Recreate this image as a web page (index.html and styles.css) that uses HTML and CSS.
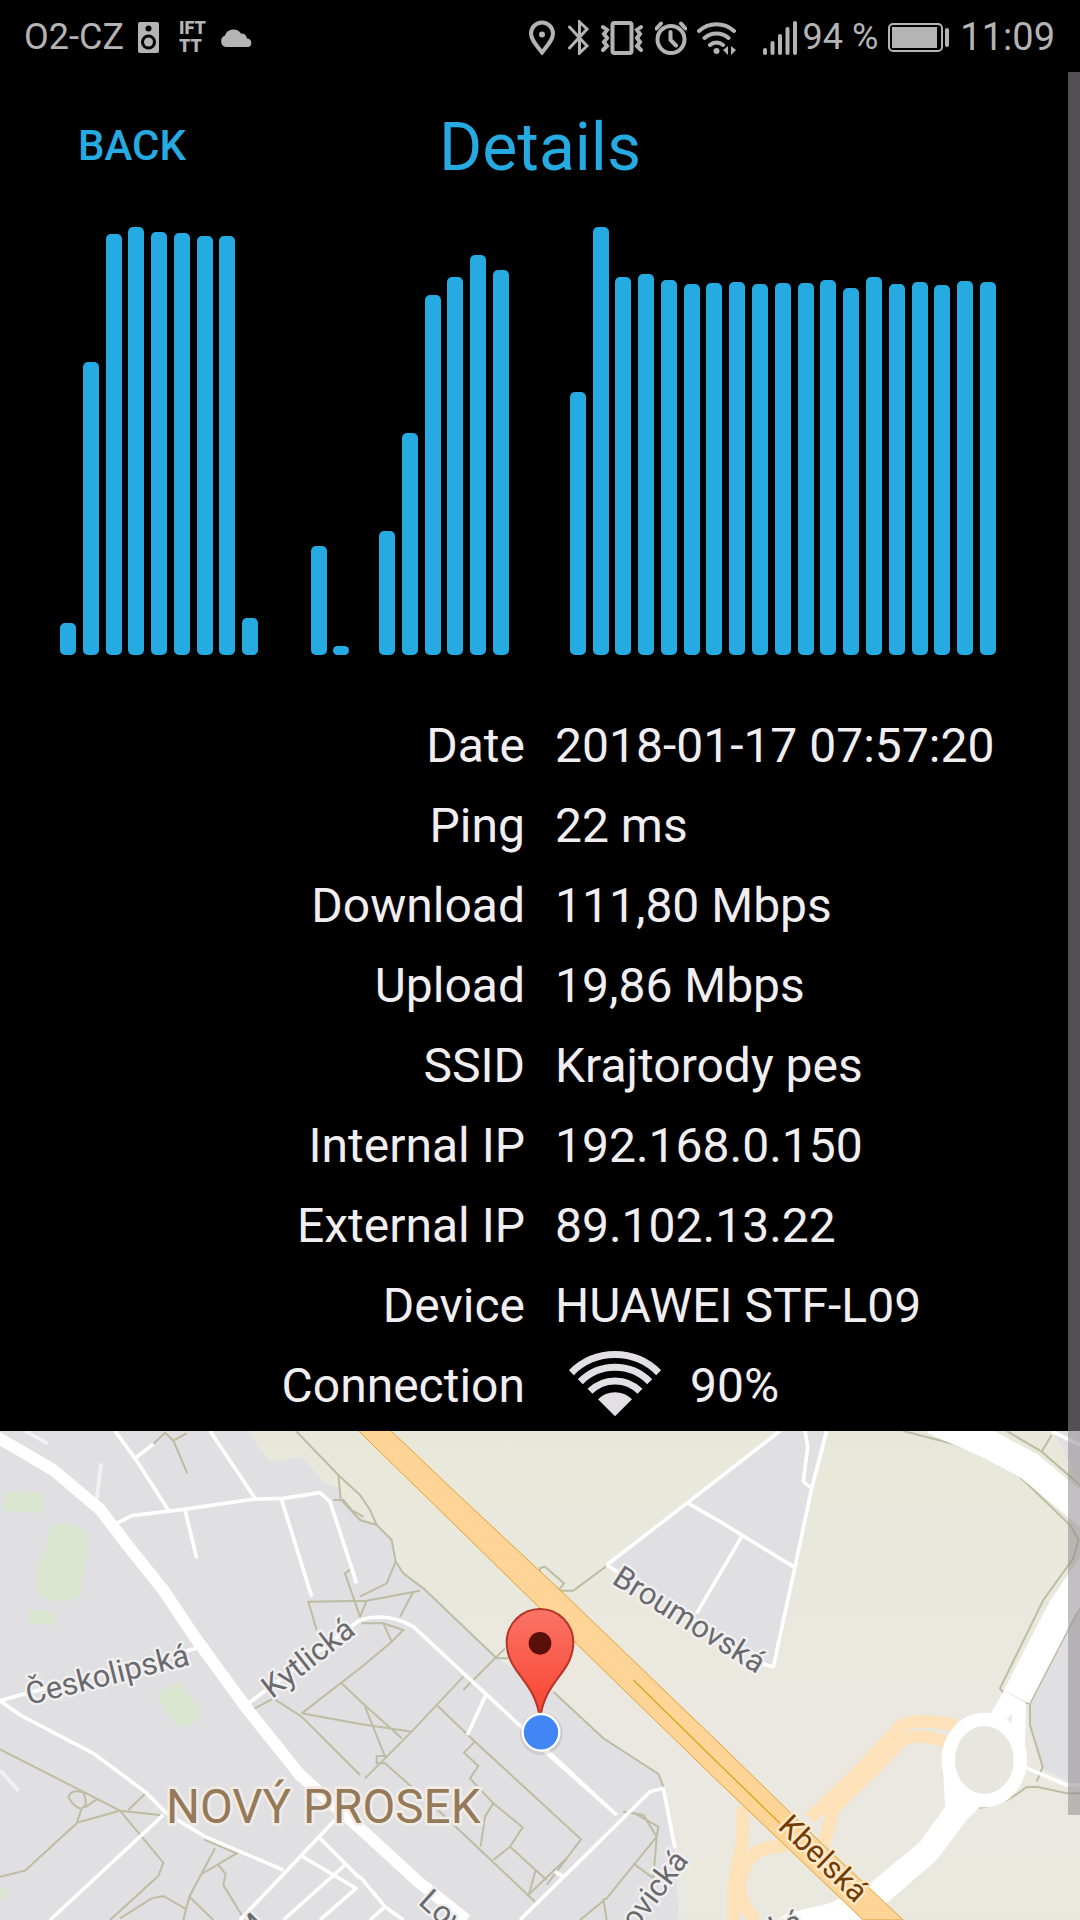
FILE: index.html
```html
<!DOCTYPE html>
<html lang="en">
<head>
    <meta charset="UTF-8">
    <meta name="viewport" content="width=device-width, initial-scale=1.0">
    <title>Details</title>
    <link rel="stylesheet" href="styles.css">
</head>
<body>

<!-- status bar -->
<div class="status">
    <div class="status-left">
        <span>O2-CZ</span>
        <svg class="icon" width="21" height="31" viewBox="0 0 21 31">
            <rect width="21" height="31" rx="2"/>
            <circle class="hole" cx="10.500" cy="6.500" r="3"/>
            <circle class="hole" cx="10.500" cy="20" r="7.500"/>
            <circle cx="10.500" cy="20" r="4.500"/>
        </svg>
        <span class="ifttt">IFT<br>TT</span>
        <svg class="icon" width="33" height="19" viewBox="0 0 33 19">
            <path d="M6 19a6 6 0 0 1-1-11.500A9 9 0 0 1 21 5.500a6 6 0 0 1 6 5A4.400 4.400 0 0 1 28.500 19z"/>
        </svg>
    </div>
    <div class="status-right">
        <svg class="line" width="28" height="35" viewBox="0 0 28 35">
            <path d="M13 32.500C8 26 2 20 2 13.500a11 11 0 0 1 22 0C24 20 18 26 13 32.500z"/>
            <circle class="dot" cx="13" cy="14.500" r="3"/>
        </svg>
        <svg class="line thin" width="24" height="35" viewBox="0 0 24 35">
            <path d="M2.500 7L20 26l-7.500 7V2L20 9 2.500 28"/>
        </svg>
        <svg class="line" width="44" height="35" viewBox="0 0 44 35">
            <rect x="11.500" y="3" width="19" height="30" rx="2"/>
            <path d="M2 7l4 3-3 4 3 4-3 4 3 4-4 4M40 7l-4 3 3 4-3 4 3 4-3 4 4 4"/>
        </svg>
        <svg class="line" width="32" height="35" viewBox="0 0 32 35">
            <circle cx="16" cy="19.500" r="13.500"/>
            <path d="M15.500 12v8l5.500 5.500M1.500 8.500L6 3.500M30.500 8.500L26 3.500"/>
        </svg>
        <svg class="line" width="56" height="35" viewBox="0 0 56 35">
            <path d="M2 11a26 26 0 0 1 35 0M7.500 18a18 18 0 0 1 24 0M13 25a10 10 0 0 1 13 0"/>
            <circle class="dot" cx="19.500" cy="31" r="3"/>
            <path class="dot" d="M31 26v9l-5-5zM34 26v9l5-5z"/>
        </svg>
        <span class="level">
            <svg class="icon" width="34" height="35" viewBox="0 0 34 35">
                <rect y="28" width="4" height="7" rx="2"/>
                <rect x="7.500" y="21" width="4" height="14" rx="2"/>
                <rect x="15" y="14" width="4" height="21" rx="2"/>
                <rect x="22.500" y="7" width="4" height="28" rx="2"/>
                <rect x="30" y="1" width="4" height="34" rx="2"/>
            </svg>
            94 %
        </span>
        <svg class="icon" width="62" height="29" viewBox="0 0 62 29">
            <rect class="frame" x="1" y="1" width="53" height="27" rx="4"/>
            <rect x="4" y="4" width="45" height="21"/>
            <rect x="57" y="5" width="4" height="19" rx="2"/>
        </svg>
        <span class="clock">11:09</span>
    </div>
</div>

<main class="screen">
    <header class="header">
        <button class="back" type="button">BACK</button>
        <h1 class="title">Details</h1>
    </header>

    <!-- download on the left, upload on the right -->
    <div class="charts">
        <div class="chart">
            <i style="height:32px"></i>
            <i style="height:293px"></i>
            <i style="height:421px"></i>
            <i style="height:428px"></i>
            <i style="height:423px"></i>
            <i style="height:422px"></i>
            <i style="height:419px"></i>
            <i style="height:419px"></i>
            <i style="height:37px"></i>
            <i style="height:0px"></i>
            <i style="height:0px"></i>
            <i style="height:109px"></i>
            <i style="height:9px"></i>
            <i style="height:0px"></i>
            <i style="height:124px"></i>
            <i style="height:222px"></i>
            <i style="height:360px"></i>
            <i style="height:378px"></i>
            <i style="height:400px"></i>
            <i style="height:385px"></i>
        </div>
        <div class="chart">
            <i style="height:0px"></i>
            <i style="height:263px"></i>
            <i style="height:428px"></i>
            <i style="height:378px"></i>
            <i style="height:381px"></i>
            <i style="height:375px"></i>
            <i style="height:371px"></i>
            <i style="height:372px"></i>
            <i style="height:373px"></i>
            <i style="height:371px"></i>
            <i style="height:372px"></i>
            <i style="height:372px"></i>
            <i style="height:375px"></i>
            <i style="height:367px"></i>
            <i style="height:378px"></i>
            <i style="height:371px"></i>
            <i style="height:373px"></i>
            <i style="height:370px"></i>
            <i style="height:374px"></i>
            <i style="height:373px"></i>
        </div>
    </div>

    <table class="details">
        <tr><th scope="row">Date</th><td>2018-01-17 07:57:20</td></tr>
        <tr><th scope="row">Ping</th><td>22 ms</td></tr>
        <tr><th scope="row">Download</th><td>111,80 Mbps</td></tr>
        <tr><th scope="row">Upload</th><td>19,86 Mbps</td></tr>
        <tr><th scope="row">SSID</th><td>Krajtorody pes</td></tr>
        <tr><th scope="row">Internal IP</th><td>192.168.0.150</td></tr>
        <tr><th scope="row">External IP</th><td>89.102.13.22</td></tr>
        <tr><th scope="row">Device</th><td>HUAWEI STF-L09</td></tr>
        <tr>
            <th scope="row">Connection</th>
            <td>
                <div class="signal">
                    <svg width="92" height="69" viewBox="0 0 276 207">
                        <path class="arc" d="M7 65a185 185 0 0 1 262 0M34 92a147 147 0 0 1 208 0M63 121a106 106 0 0 1 150 0"/>
                        <path class="core" d="M138 196L87 145a72 72 0 0 1 102 0z"/>
                    </svg>
                    90%
                </div>
            </td>
        </tr>
    </table>

    <svg class="map" viewBox="0 33 3240 1467">
        <defs>
            <linearGradient id="pin" x1="0" y1="0" x2="0" y2="1">
                <stop offset="0" stop-color="#fa7466"/>
                <stop offset="1" stop-color="#f9412f"/>
            </linearGradient>
            <linearGradient id="land" x1="0" y1="0" x2="0" y2="1">
                <stop offset="0" stop-color="#e8e8da"/>
                <stop offset=".65" stop-color="#ebe8e1"/>
                <stop offset="1" stop-color="#e9e8de"/>
            </linearGradient>
        </defs>
        <rect class="land" y="33" width="3240" height="1467"/>

        <!-- built-up areas -->
        <path class="town" d="M0 33H750L770 75 810 125 905 110 975 190 1015 205 1050 270 1130 320 1175 360 1190 425 1210 460 1280 510 1490 715 1660 820 1810 955 1970 1060 1990 1100 2025 1285 2035 1500H0z"/>
        <path class="town" d="M1820 435L2060 250 2160 175 2330 33H2480L2435 205 2380 440 2320 740z"/>
        <path class="town" d="M3240 560L3090 850V915L3125 1045 3240 1100zM3160 33H3240V190z"/>
        <path class="park" d="M10 215l120 5v60l-120-8zM150 315q100-15 115 40l-20 160q-60 60-130 5-20-80 20-120zM85 568l80 8v40l-85-8zM470 820l65-35 70 80-10 35-50 25-50-50zM0 1400l20 10-5 30-15 5z"/>

        <!-- footpaths -->
        <g class="path">
            <path d="M460 72L495 38 520 62 562 160M520 62L560 40M888 33L1015 165 1080 225 1110 270 1130 315M1015 165L1022 238 1080 300 1130 315 1175 360 1187 425 1210 460 1270 505 1490 715H1525M1000 240H1030L1055 270 1090 290"/>
            <path d="M1187 425L1160 490 1080 530M1260 512L1100 542 925 545 950 630M1100 542L1080 590 1035 460 1052 448M1240 515L1200 590M1085 610L1150 610 1210 630 1175 665 1080 745 905 880M1150 610L1175 665"/>
            <path d="M760 868L820 835 905 890 1080 1065M905 880L1080 912 1235 935M1025 790L1080 842 1205 955M1095 860L1155 1010M1390 770L1235 935 1095 1075M1515 685L1390 810M1310 855L1425 965 1743 1258 1640 1395M1155 1030H1130V1008H1160M1155 1030L1330 1185 1605 1445"/>
            <path d="M1425 965L1392 998 1435 1038 1410 1075 1480 1150 1568 1222 1530 1280 1480 1320M1480 1150L1455 1190 1442 1280M1530 1280L1640 1380M1607 1350L1585 1430M1590 1420L1700 1315"/>
            <path d="M1660 815L1810 955 1975 1062 1990 1100M1870 1175L1930 1185 1970 1250 1820 1435 1740 1500M1900 1178L1975 1220 1970 1250 1960 1375 1900 1330M1810 1435L1820 1500"/>
            <path d="M0 988L230 1105 360 1172 480 1185M230 1208L360 1172 490 1328 475 1368 330 1500M360 1495L455 1435 490 1428 560 1468M290 1138L255 1162M205 1130q10-25 45-12 18 40-8 48-25-8-37-36M245 1165L230 1210 75 1352 0 1370M435 1122L385 1170"/>
            <path d="M612 1258L710 1300 600 1365M645 1285L568 1430 550 1500M655 1335L677 1362 670 1395 725 1485M568 1430L640 1500"/>
            <path d="M1620 505V445L1635 440 1692 490 1675 512H1720L1820 438"/>
            <path d="M2710 33L2860 72 2930 98 3060 170 3210 315 3236 360 3220 415 3130 540 3000 805 3012 820M3020 33L3125 95 3240 195M3125 95L3155 45M3240 560L3090 850H3078M3090 850V915L3128 1040 3110 1085M2925 1164Q3010 1160 3078 1102L3110 1100 3200 1120H3240"/>
        </g>

        <!-- small streets -->
        <g class="street">
            <path d="M345 33L405 115 505 270M405 115L460 72M630 33L765 235M350 310L395 287 550 268 765 237 850 235 960 218 990 245 1070 490M845 240L935 530M555 270L590 415"/>
            <path class="faint" d="M303 130L290 240M75 33L145 72M0 1050L55 1112"/>
            <path d="M0 842L50 828 590 685M0 842L60 885 280 1000 435 1115 500 1180 615 1250 850 1350M490 1185L150 1500M745 850L1080 600 Q1160 575 1240 620L1450 815 1850 1185M1460 820L1402 945M1630 990L1850 1185M1560 1500L1950 1115 1990 1105M1990 1105L2025 1285M1010 1195L720 1500M955 1250L1080 1375M905 1308L1068 1405 960 1500M1035 1335L850 1500"/>
            <path d="M1080 1370L1155 1460 1210 1500M1155 1460L1110 1500M1665 1355L1690 1370"/>
            <path d="M1820 435L2060 250 2340 33M2480 33L2435 205 2385 440 2320 740 2270 728M1820 435L1860 460M2065 250L2160 305 2380 440M2225 350L2090 580M2415 33L2423 80 2410 185 2435 205"/>
            <path d="M3070 1040L3200 1095H3240M3155 33L3240 75"/>
            <path d="M1205 98L1295 170 1365 240"/>
        </g>

        <!-- link roads -->
        <g class="ramp">
            <path d="M2870 917Q2750 890 2700 920L2580 1050 2430 1195"/>
            <path d="M2850 970Q2750 930 2700 965L2650 1020 2500 1165 2470 1280"/>
            <path d="M2230 1160L2225 1280 2200 1400V1500"/>
            <path d="M2360 1280Q2260 1270 2230 1350 2200 1440 2270 1500"/>
        </g>

        <!-- main roads -->
        <path class="road" d="M-20 45L160 150 300 268 390 385 490 510 580 645 740 865 900 1065 1080 1225 1260 1390 1400 1500"/>
        <path class="road wide" d="M2800 0L2960 70 3090 140 3270 290"/>
        <path class="road wide" d="M3280 430L3190 560 3050 830"/>
        <path class="white" d="M3012 812L2970 885 3010 915 3035 880 3035 960 3075 970 3078 850z"/>
        <ellipse class="ring" cx="2953" cy="1020" rx="108" ry="122"/>
        <path class="white" d="M2830 1060L2835 1160 2760 1265 2610 1390 2490 1450 2360 1480 2330 1500H2590L2660 1450 2810 1320 2900 1200 2940 1160 2880 1110 2878 1165 2900 1140 2870 1090z"/>

        <path class="highway" d="M1068 25L1610 555 2160 1090 2590 1500H2710L2470 1275 2160 972 1680 510 1370 220 1165 25z"/>
        <path class="lane" d="M1900 780L2160 1035 2340 1210"/>

        <g class="label">
            <text transform="translate(86 855) rotate(-14)">Českolipská</text>
            <text transform="translate(816 838) rotate(-38)">Kytlická</text>
            <text transform="translate(1832 488) rotate(32)">Broumovská</text>
            <text transform="translate(1252 1450) rotate(42)">Lovosická</text>
            <text transform="translate(1908 1534) rotate(-53)">ovická</text>
            <text transform="translate(2320 1560) rotate(-18)">ká</text>
            <text transform="translate(744 1576) rotate(-45)">M</text>
            <text class="highway-name" transform="translate(2330 1224) rotate(44)">Kbelská</text>
        </g>
        <text class="district" x="498" y="1208">NOVÝ PROSEK</text>

        <!-- marker and current position -->
        <path class="pin" d="M1620 900C1608 780 1520 760 1520 667a100 100 0 0 1 200 0C1720 760 1632 780 1620 900z"/>
        <circle class="pin-hole" cx="1620" cy="670" r="34"/>
        <circle class="halo" cx="1624" cy="941" r="64"/>
        <circle class="me" cx="1623" cy="937" r="55"/>
    </svg>

    <div class="scrollbar"></div>
</main>

</body>
</html>
```
FILE: styles.css
```css
* {
    box-sizing: border-box;
}
body {
    margin: 0;
    background: #000;
    color: #f0eef0;
    font-family: Roboto, "Noto Sans", sans-serif;
}

/* status bar */
.status {
    display: flex;
    justify-content: space-between;
    height: 72px;
    padding: 2px 25px 0 24px;
    color: #b4b4b4;
    font-size: 36px;
    line-height: 70px;
}
.status-left,
.status-right,
.level {
    display: flex;
    align-items: center;
    white-space: nowrap;
}
.status-left {
    gap: 14px;
}
.status-right {
    gap: 10px;
}
.level {
    gap: 6px;
}
.clock {
    font-size: 38px;
}
.ifttt {
    margin-left: 6px;
    font-size: 18px;
    font-weight: 900;
    line-height: 18px;
}
.icon {
    fill: #b4b4b4;
}
.icon .hole {
    fill: #000;
}
.icon .frame {
    fill: none;
    stroke: #b4b4b4;
    stroke-width: 2;
}
.line {
    fill: none;
    stroke: #b4b4b4;
    stroke-width: 4;
    stroke-linecap: round;
}
.thin {
    stroke-width: 3;
}
.line .dot {
    fill: #b4b4b4;
    stroke: none;
}

/* header */
.screen {
    position: relative;
}
.header {
    display: grid;
    grid-template-columns: 1fr auto 1fr;
    align-items: center;
    height: 148px;
    padding: 0 78px;
    color: #25aae1;
}
.back {
    justify-self: start;
    padding: 0 0 2px;
    border: 0;
    background: none;
    color: inherit;
    font: 500 42px Roboto, "Noto Sans", sans-serif;
}
.title {
    margin: 0;
    padding-top: 2px;
    font-size: 66px;
    font-weight: 400;
}

/* charts */
.charts {
    display: grid;
    grid-template-columns: 1fr 1fr;
    gap: 38px;
    height: 435px;
    padding: 0 84px 0 60px;
}
.chart {
    display: flex;
    align-items: flex-end;
    justify-content: space-between;
}
.chart i {
    width: 16px;
    border-radius: 5px;
    background: #25aae1;
}

/* details */
.details {
    width: 100%;
    margin-top: 50px;
    border-collapse: collapse;
    table-layout: fixed;
    font-size: 48px;
}
.details th,
.details td {
    height: 80px;
    padding: 0 15px;
    font-weight: 400;
    text-align: left;
    white-space: nowrap;
}
.details th {
    text-align: right;
}
.signal {
    display: flex;
    align-items: center;
    gap: 29px;
    padding-left: 14px;
}
.arc {
    fill: none;
    stroke: #e2e0e2;
    stroke-width: 21;
}
.core {
    fill: #e2e0e2;
}

/* map */
.map {
    display: block;
    width: 100%;
    margin-top: 6px;
}
.land {
    fill: url(#land);
}
.town {
    fill: #e0dfe1;
}
.park {
    fill: #dbe6d0;
}
.path {
    fill: none;
    stroke: #bcbda2;
    stroke-width: 6;
}
.street {
    fill: none;
    stroke: #fff;
    stroke-width: 11;
    stroke-linejoin: round;
}
.street .faint {
    stroke: #f2f2f2;
}
.ramp {
    fill: none;
    stroke: #fde2b9;
    stroke-width: 38;
}
.road {
    fill: none;
    stroke: #fff;
    stroke-width: 36;
    stroke-linejoin: round;
}
.wide {
    stroke-width: 86;
}
.ring {
    fill: #e7e7df;
    stroke: #fff;
    stroke-width: 40;
}
.white {
    fill: #fff;
}
.highway {
    fill: #ffd597;
    stroke: #e2a132;
    stroke-width: 3;
}
.lane {
    fill: none;
    stroke: #dba520;
    stroke-width: 4;
}
.label text {
    fill: #6a6a6e;
    stroke: #f1f0f1;
    stroke-width: 14;
    stroke-linejoin: round;
    paint-order: stroke;
    font-size: 93px;
}
.label .highway-name {
    fill: #713c00;
    stroke: #ffe9cb;
}
.district {
    fill: #957a59;
    stroke: #f1ece8;
    stroke-width: 16;
    stroke-linejoin: round;
    paint-order: stroke;
    font-size: 143px;
}
.pin {
    fill: url(#pin);
    stroke: #b53529;
    stroke-width: 6;
}
.pin-hole {
    fill: #590f0a;
}
.halo {
    fill: rgba(90, 90, 110, .15);
}
.me {
    fill: #4285f4;
    stroke: #fff;
    stroke-width: 7;
}

.scrollbar {
    position: absolute;
    top: 0;
    right: 0;
    bottom: 105px;
    width: 12px;
    background: rgba(146, 143, 146, .56);
}
```
